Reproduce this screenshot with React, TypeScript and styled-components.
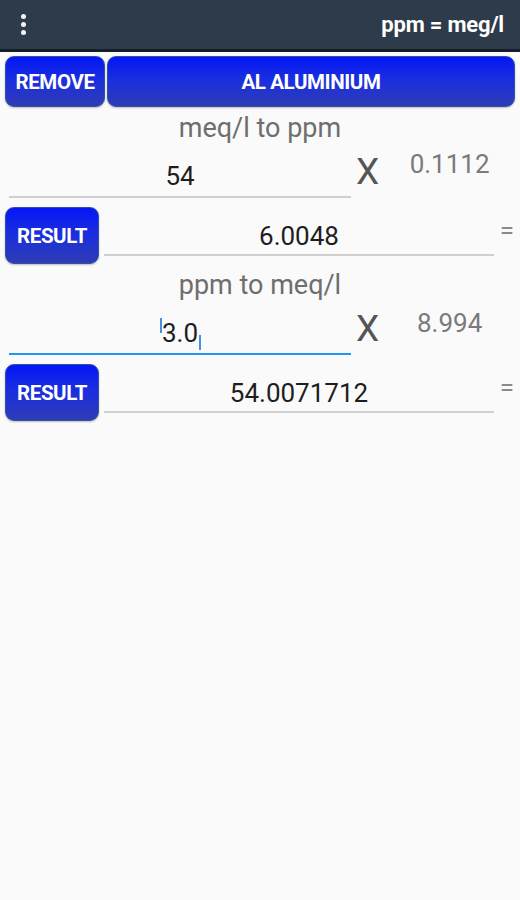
import React from 'react';
import styled, {createGlobalStyle} from 'styled-components';

const GlobalStyle = createGlobalStyle`
    html, body {
        margin: 0;
        padding: 0;
        background: #fafafa;
        font-family: Roboto, "Liberation Sans", sans-serif;
    }
`;

type Conversion = {
    title: string;
    value: string;
    factor: string;
    result: string;
    focused?: boolean;
};

const conversions: Conversion[] = [
    {title: 'meq/l to ppm', value: '54', factor: '0.1112', result: '6.0048'},
    {title: 'ppm to meq/l', value: '3.0', factor: '8.994', result: '54.0071712', focused: true},
];

export default function App() {
    return (
        <Screen>
            <GlobalStyle/>
            <Toolbar>
                <MenuDots>
                    <span/><span/><span/>
                </MenuDots>
                <ToolbarTitle>ppm = meg/l</ToolbarTitle>
            </Toolbar>
            <TopRow>
                <BlueButton $width={'100px'} $height={'51px'}>REMOVE</BlueButton>
                <BlueButton $grow $height={'51px'}>AL ALUMINIUM</BlueButton>
            </TopRow>
            {conversions.map((c) => (
                <Section key={c.title}>
                    <SectionTitle>{c.title}</SectionTitle>
                    <InputRow>
                        <InputField $focused={c.focused}>
                            <InputText>
                                {c.focused && <CaretMark $side="left"/>}
                                {c.value}
                                {c.focused && <CaretMark $side="right"/>}
                            </InputText>
                        </InputField>
                        <Times>X</Times>
                        <Factor $focused={c.focused}>{c.factor}</Factor>
                    </InputRow>
                    <ResultRow>
                        <BlueButton $width={'94px'} $height={'57px'}>RESULT</BlueButton>
                        <ResultField>{c.result}</ResultField>
                        <Equals>=</Equals>
                    </ResultRow>
                </Section>
            ))}
        </Screen>
    );
}

const Screen = styled.div`
    width: 520px;
    min-height: 900px;
    background: #fafafa;
    display: flex;
    flex-direction: column;
`;

const Toolbar = styled.header`
    height: 49px;
    background: #2d3b4b;
    border-bottom: 3px solid #151c2a;
    display: flex;
    align-items: center;
    justify-content: space-between;
    padding: 0 16px 0 21px;
    box-sizing: content-box;
`;

const MenuDots = styled.div`
    display: flex;
    flex-direction: column;
    gap: 3px;

    span {
        width: 5px;
        height: 5px;
        border-radius: 50%;
        background: #f4f4f4;
    }
`;

const ToolbarTitle = styled.div`
    color: #ffffff;
    font-weight: 700;
    font-size: 22px;
    letter-spacing: -0.2px;
`;

const TopRow = styled.div`
    display: flex;
    gap: 2px;
    padding: 4px 5px 0 5px;
`;

const BlueButton = styled.button<{$width?: string; $height: string; $grow?: boolean}>`
    width: ${p => p.$width ?? 'auto'};
    flex: ${p => (p.$grow ? '1' : '0 0 auto')};
    height: ${p => p.$height};
    border-radius: 9px;
    border: 1.5px solid #3050a0;
    background: linear-gradient(to bottom, #0416f6 0%, #1a2ee0 45%, #2e3cb4 100%);
    color: #ffffff;
    font-family: Roboto, "Liberation Sans", sans-serif;
    font-weight: 700;
    font-size: 20.5px;
    letter-spacing: -0.4px;
    padding: 0;
    white-space: nowrap;
    box-shadow: 0 1px 2px rgba(0, 0, 0, 0.25);
`;

const Section = styled.section`
    display: flex;
    flex-direction: column;
`;

const SectionTitle = styled.div`
    text-align: center;
    color: #6e6e6e;
    font-size: 27px;
    line-height: 30px;
    padding: 6px 0 0 0;
`;

const InputRow = styled.div`
    display: flex;
    align-items: flex-start;
    height: 56px;
    padding-left: 9px;
`;

const InputField = styled.div<{$focused?: boolean}>`
    width: 342px;
    height: 53px;
    border-bottom: 2px solid ${p => (p.$focused ? '#2196f3' : '#cfcfcf')};
    display: flex;
    align-items: flex-end;
    justify-content: center;
`;

const InputText = styled.span`
    position: relative;
    color: #1e1e1e;
    font-size: 26px;
    line-height: 30px;
    padding-bottom: 5px;
`;

const CaretMark = styled.i<{$side: 'left' | 'right'}>`
    position: absolute;
    width: 2px;
    height: 15px;
    background: #4a90e2;
    ${p => (p.$side === 'left' ? 'left: -2px; top: 0px;' : 'right: -3px; top: 17px;')}
`;

const Times = styled.div`
    padding-left: 5px;
    color: #555555;
    font-size: 37px;
    line-height: 40px;
    padding-top: 9px;
`;

const Factor = styled.div<{$focused?: boolean}>`
    flex: 1;
    text-align: center;
    color: #7a7a7a;
    font-size: 26px;
    line-height: 30px;
    padding-top: ${p => (p.$focused ? '8px' : '6px')};
`;

const ResultRow = styled.div`
    display: flex;
    align-items: flex-start;
    padding: 8px 0 0 5px;
`;

const ResultField = styled.div`
    width: 390px;
    margin-left: 5px;
    height: 47px;
    border-bottom: 2px solid #cfcfcf;
    display: flex;
    align-items: flex-end;
    justify-content: center;
    color: #1e1e1e;
    font-size: 26px;
    line-height: 36px;
`;

const Equals = styled.div`
    flex: 1;
    text-align: center;
    color: #8a8a8a;
    font-size: 26px;
    line-height: 30px;
    padding-top: 8px;
`;
